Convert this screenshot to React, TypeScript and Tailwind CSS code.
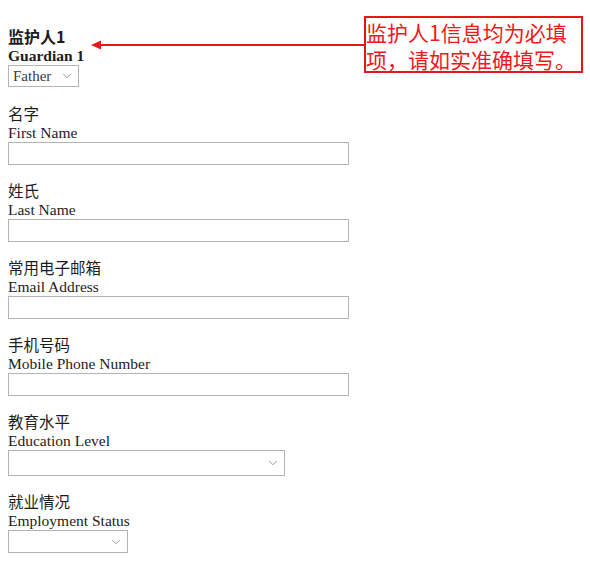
import { ChevronDown } from "lucide-react";

const serif = "font-['Liberation_Serif','Noto_Sans_CJK_SC',serif]";

function Field({ zh, en, children }: { zh: string; en: string; children: React.ReactNode }) {
  return (
    <div className="mb-4">
      <div className="h-[19px] text-[15.5px] leading-[19px] font-['Noto_Sans_CJK_SC',sans-serif]">{zh}</div>
      <div className={`h-[19px] text-[15.5px] leading-[19px] ${serif}`}>{en}</div>
      {children}
    </div>
  );
}

function Select({ width, height, value }: { width: string; height: string; value?: string }) {
  return (
    <div className={`relative ${width} ${height}`}>
      <div className={`flex h-full w-full items-center border border-[#b4b4b4] bg-white pl-[4px] text-[15px] text-[#3a3a3a] ${serif}`}>
        {value}
      </div>
      <ChevronDown
        className="absolute right-[5px] top-1/2 h-[14px] w-[14px] -translate-y-1/2 text-[#8a8a8a]"
        strokeWidth={1.5}
      />
    </div>
  );
}

function TextInput() {
  return <div className="h-[23px] w-[341px] border border-[#b4b4b4] bg-white" />;
}

export default function App() {
  return (
    <div className="relative h-[565px] w-[590px] overflow-hidden bg-white text-[#1c1c1c]">
      <div className="px-2 pt-[27px]">
        <div className="h-[19px] text-[16px] font-bold leading-[19px] font-['Noto_Sans_CJK_SC',sans-serif]">监护人1</div>
        <div className={`h-[19px] text-[15.5px] font-bold leading-[19px] ${serif}`}>Guardian 1</div>
        <div className="mb-[17px]">
          <Select width="w-[71px]" height="h-[22px]" value="Father" />
        </div>

        <Field zh="名字" en="First Name">
          <TextInput />
        </Field>
        <Field zh="姓氏" en="Last Name">
          <TextInput />
        </Field>
        <Field zh="常用电子邮箱" en="Email Address">
          <TextInput />
        </Field>
        <Field zh="手机号码" en="Mobile Phone Number">
          <TextInput />
        </Field>
        <Field zh="教育水平" en="Education Level">
          <Select width="w-[277px]" height="h-[26px]" />
        </Field>
        <Field zh="就业情况" en="Employment Status">
          <Select width="w-[120px]" height="h-[23px]" />
        </Field>
      </div>

      {/* annotation callout */}
      <svg className="absolute left-[89px] top-[39px]" width="276" height="12" viewBox="0 0 276 12">
        <line x1="8" y1="6" x2="276" y2="6" stroke="#e8161b" strokeWidth="2" />
        <path d="M2 6 L12 1.5 L12 10.5 Z" fill="#e8161b" />
      </svg>
      <div className="absolute left-[364px] top-[16px] h-[57px] w-[219px] border-2 border-[#e8161b] bg-white pt-[1px] text-[21px] leading-[27px] text-[#f01818] font-['Noto_Sans_CJK_SC',sans-serif] whitespace-nowrap">
        监护人1信息均为必填
        <br />
        项，请如实准确填写。
      </div>
    </div>
  );
}
